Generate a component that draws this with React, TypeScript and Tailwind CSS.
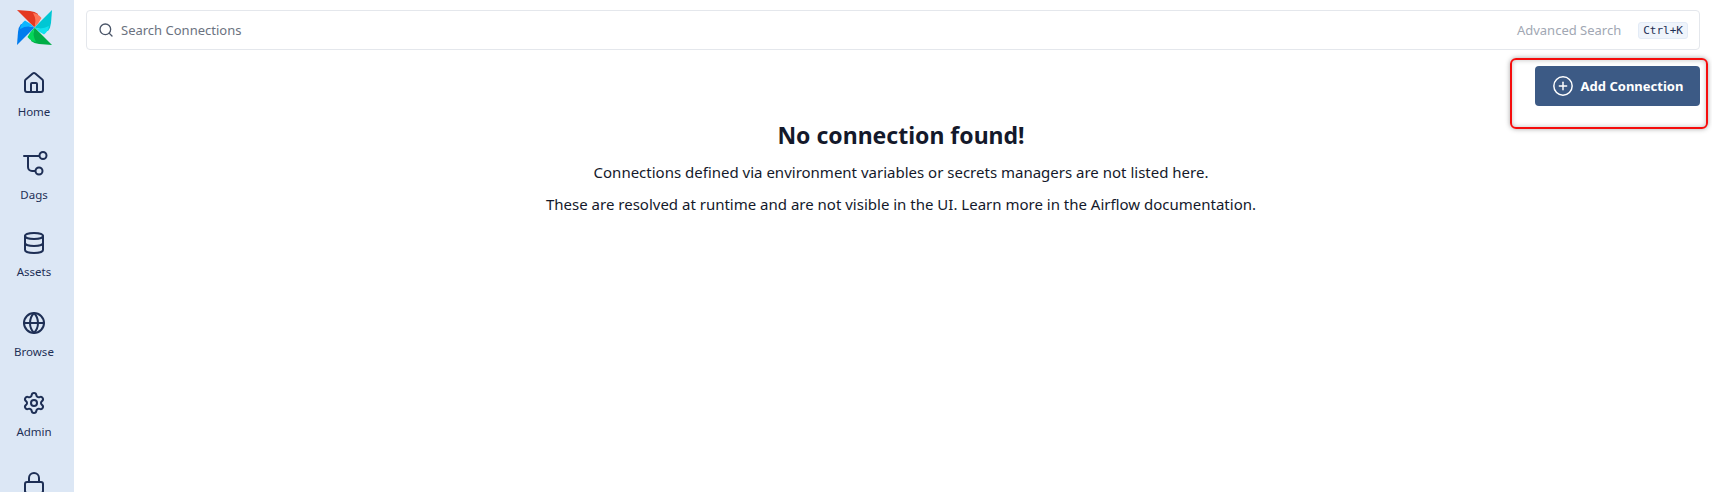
import { House, Database, Globe, Settings, Lock, Search, CirclePlus } from "lucide-react";
import type { ReactNode } from "react";

function NavItem({ icon, label, h, gap }: { icon: ReactNode; label?: string; h: string; gap: string }) {
  return (
    <div className={`flex w-full shrink-0 flex-col items-center text-[#1e2f55] ${h} ${gap}`}>
      {icon}
      {label && <span className="text-[11.5px] leading-[16px]">{label}</span>}
    </div>
  );
}

function DagIcon() {
  return (
    <svg className="ml-[3px]" width="26" height="26" viewBox="0 0 26 26" fill="none" stroke="currentColor" strokeWidth="2" strokeLinecap="round" strokeLinejoin="round">
      <path d="M1 5h15" />
      <circle cx="20" cy="4.500" r="3.500" />
      <path d="M5 5v11a4 4 0 0 0 4 4h3" />
      <circle cx="16" cy="20" r="3.500" />
    </svg>
  );
}

const blades = [
  { rot: 0, dark: "#e43921", light: "#ff7557" },
  { rot: 90, dark: "#00c7d4", light: "#11e1ee" },
  { rot: 180, dark: "#00ad46", light: "#04d659" },
  { rot: 270, dark: "#017cee", light: "#0cb6ff" },
];

function Logo() {
  return (
    <svg width="35" height="35" viewBox="0 0 35 35">
      {blades.map((b) => (
        <g key={b.rot} transform={`rotate(${b.rot} 17.5 17.5)`}>
          <path d="M0 0 L13 1 Q18 1.500 21 4 L17.500 17.500 Z" fill={b.dark} />
          <path d="M16 3 Q21 3.500 24.500 8 Q22 13 17.500 17.500 Q20 10 16 3 Z" fill={b.light} />
        </g>
      ))}
    </svg>
  );
}

export default function App() {
  return (
    <div className="flex h-screen w-full overflow-hidden bg-white [font-family:'Noto_Sans','Open_Sans',sans-serif]">
      <aside className="flex h-full w-[74px] shrink-0 flex-col items-center bg-[#dce7f5] pr-[6px] pt-[10px]">
        <div className="mb-[26px] shrink-0"><Logo /></div>
        <NavItem h="h-[80px]" gap="gap-[9px]" label="Home" icon={<House size={24} strokeWidth={2} />} />
        <NavItem h="h-[80px]" gap="gap-[10px]" label="Dags" icon={<DagIcon />} />
        <NavItem h="h-[80px]" gap="gap-[9px]" label="Assets" icon={<Database size={24} strokeWidth={2} />} />
        <NavItem h="h-[80px]" gap="gap-[9px]" label="Browse" icon={<Globe size={24} strokeWidth={2} />} />
        <NavItem h="h-[80px]" gap="gap-[9px]" label="Admin" icon={<Settings size={24} strokeWidth={2} />} />
        <NavItem h="h-[80px]" gap="gap-[9px]" icon={<Lock size={24} strokeWidth={2} />} />
      </aside>
      <main className="relative flex min-w-0 flex-1 flex-col pl-[12px] pr-[12px] pt-[10px]">
        <div className="flex h-[40px] shrink-0 items-center rounded-[4px] border border-[#e4e7ec] bg-white pl-[11px] pr-[11px]">
          <Search size={16} strokeWidth={2} className="text-[#4a5568]" />
          <span className="ml-[7px] pt-[2px] text-[13px] text-[#6b7280]">Search Connections</span>
          <span className="ml-auto pt-[2px] text-[13px] text-[#a1a7b3]">Advanced Search</span>
          <kbd className="ml-[17px] mt-[1px] rounded-[3px] border border-[#e3ebf6] bg-[#eff4fb] px-[4px] text-[11px] leading-[15px] text-[#1e2f55] [font-family:'DejaVu_Sans_Mono',monospace]">Ctrl+K</kbd>
        </div>
        <div className="mt-[16px] flex shrink-0 justify-end">
          <button className="flex h-[40px] w-[165px] items-center justify-center gap-[7px] rounded-[4px] bg-[#3c5a85] text-[13px] font-bold text-white">
            <CirclePlus size={22} strokeWidth={1.6} />
            <span className="pt-[2px]">Add Connection</span>
          </button>
        </div>
        <div className="mt-[11px] flex flex-col items-center pl-[16px] text-[#14192b]">
          <h2 className="text-[23px] font-bold leading-[36px]">No connection found!</h2>
          <p className="mt-[7px] text-[15px] leading-[24px]">Connections defined via environment variables or secrets managers are not listed here.</p>
          <p className="mt-[8px] text-[15px] leading-[24px]">These are resolved at runtime and are not visible in the UI. Learn more in the Airflow documentation.</p>
        </div>
        <div className="pointer-events-none absolute left-[1436px] top-[58px] h-[71px] w-[198px] rounded-[6px] border-2 border-[#f50d0d] shadow-[0_0_5px_rgba(0,0,0,0.35),inset_0_0_5px_rgba(0,0,0,0.25)]" />
      </main>
    </div>
  );
}
